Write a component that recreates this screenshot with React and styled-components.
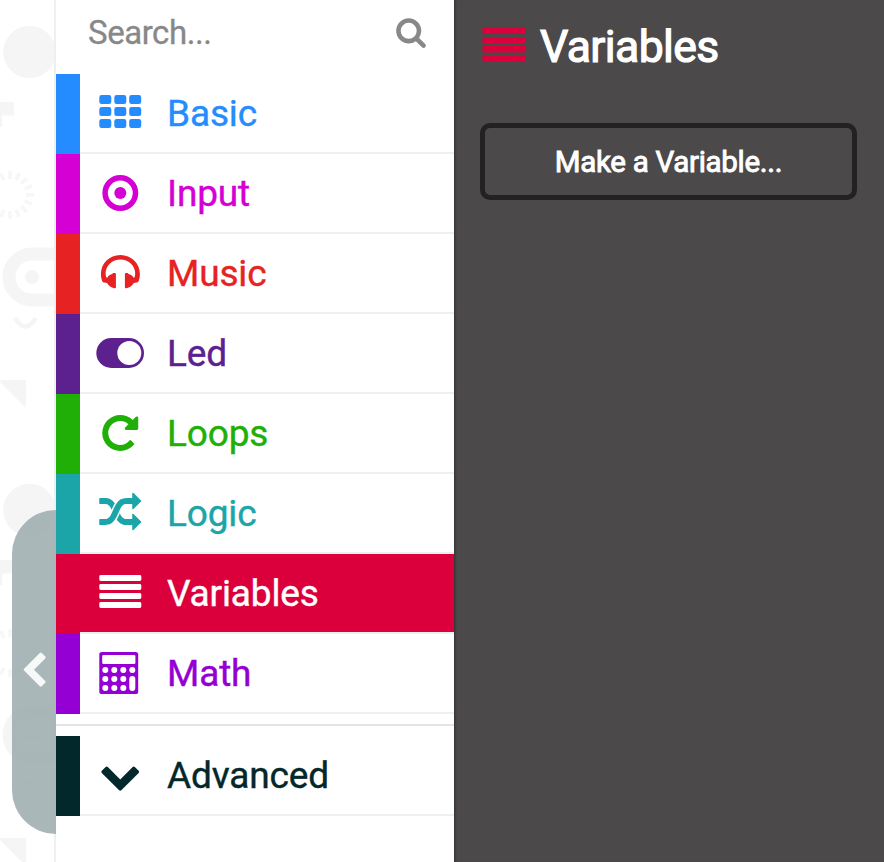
import React from "react";
import styled, { createGlobalStyle } from "styled-components";

const GlobalStyle = createGlobalStyle`
  * { box-sizing: border-box; }
  body { margin: 0; background: #fff; font-family: Roboto, "Liberation Sans", sans-serif; }
`;

const Editor = styled.div`
  display: flex;
  width: 884px;
  height: 862px;
  overflow: hidden;
  background: #fff;
`;

const Simulator = styled.aside`
  position: relative;
  flex: 0 0 56px;
  border-right: 2px solid #ecf0f1;
`;

const Backdrop = styled.svg`
  display: block;
  width: 54px;
  height: 862px;
`;

const CollapseTab = styled.button`
  position: absolute;
  left: 12px;
  top: 510px;
  width: 44px;
  height: 324px;
  border: 0;
  border-radius: 44px 0 0 44px;
  background: rgba(158, 173, 174, 0.88);
  display: flex;
  align-items: center;
  padding: 0 0 2px 3px;
`;

const Toolbox = styled.nav`
  flex: 0 0 398px;
  display: flex;
  flex-direction: column;
`;

const SearchBar = styled.div`
  height: 74px;
  padding: 0 27px 10px 32px;
  display: flex;
  align-items: center;
  justify-content: space-between;
  color: #888;
  font-size: 33px;
`;

const SearchText = styled.span`
  letter-spacing: -0.45px;
  -webkit-text-stroke: 0.3px currentColor;
`;

const Category = styled.div`
  height: 80px;
  display: flex;
  color: ${(p) => (p.$selected ? "#fff" : p.$color)};
`;

const ColorBar = styled.div`
  flex: 0 0 24px;
  background: ${(p) => p.$color};
`;

const CategoryBody = styled.div`
  flex: 1;
  display: flex;
  align-items: center;
  gap: 23px;
  padding-left: 16px;
  border-bottom: 2px solid #ecf0f1;
  background: ${(p) => p.$fill || "#fff"};
  background-clip: padding-box;
`;

const CategoryName = styled.span`
  padding-top: 2px;
  font-size: 37px;
  line-height: 76px;
  letter-spacing: -0.15px;
  -webkit-text-stroke: 0.4px currentColor;
`;

const Divider = styled.div`
  height: 2px;
  margin: 10px 0;
  background: #e3e5e5;
`;

const Flyout = styled.section`
  flex: 1;
  padding: 23px 26px 0;
  background: #4b494a;
  box-shadow: inset 3px 0 3px -2px rgba(0, 0, 0, 0.35);
`;

const FlyoutHeader = styled.header`
  display: flex;
  align-items: center;
  gap: 14px;
  height: 44px;
  padding-left: 2px;
  color: #fff;
`;

const FlyoutTitle = styled.h1`
  margin: 0;
  padding-top: 4px;
  font-size: 44.5px;
  font-weight: 400;
  line-height: 44px;
  letter-spacing: -0.6px;
  -webkit-text-stroke: 1.2px #fff;
`;

const FlyoutButton = styled.button`
  display: block;
  width: 377px;
  height: 77px;
  margin-top: 56px;
  padding: 0;
  border: 5px solid #222;
  border-radius: 10px;
  background: transparent;
  color: #fff;
  font: 400 29.5px Roboto, sans-serif;
  letter-spacing: -0.3px;
  -webkit-text-stroke: 0.9px #fff;
`;

const Glyph = styled.svg`
  display: block;
  flex: none;
  width: ${(p) => p.$size || 48}px;
  height: ${(p) => p.$size || 48}px;
  fill: currentColor;
`;

const OutlineGlyph = ({ d }) => (
  <Glyph viewBox="-138 -128 2048 2048"><path d={d} /></Glyph>
);

const paths = {
  repeat: "M1664 256v448q0 26-19 45t-45 19h-448q-42 0-59-40-17-39 14-69l138-138q-148-137-349-137-104 0-198.500 40.500t-163.500 109.500-109.500 163.500-40.500 198.500 40.500 198.500 109.500 163.500 163.500 109.500 198.500 40.500q119 0 225-52t179-147q7-10 23-12 15 0 25 9l137 138q9 8 9.500 20.500t-7.500 22.500q-109 132-264 204.500t-327 72.500q-156 0-298-61t-245-164-164-245-61-298 61-298 164-245 245-164 298-61q147 0 284.500 55.500t244.500 156.500l130-129q29-31 70-14 39 17 39 59z",
  random: "M666 481q-60 92-137 273-22-45-37-72.500t-40.500-63.500-51-56.500-63-35-81.500-14.500h-224q-14 0-23-9t-9-23v-192q0-14 9-23t23-9h224q250 0 410 225zm1126 799q0 14-9 23l-320 320q-9 9-23 9-13 0-22.500-9.500t-9.500-22.500v-192q-32 0-85 .5t-81 1-73-1-71-5-64-10.500-63-18.500-58-28.500-59-40-55-53.500-56-69.500q59-93 136-273 22 45 37 72.500t40.500 63.500 51 56.500 63 35 81.500 14.500h256v-192q0-14 9-23t23-9q12 0 24 10l319 319q9 9 9 23zm0-896q0 14-9 23l-320 320q-9 9-23 9-13 0-22.500-9.500t-9.500-22.500v-192h-256q-48 0-87 15t-69 45-51 61.500-45 77.500q-32 62-78 171-29 66-49.500 111t-54 105-64 100-74 83-90 68.500-106.500 42-128 16.500h-224q-14 0-23-9t-9-23v-192q0-14 9-23t23-9h224q48 0 87-15t69-45 51-61.500 45-77.500q32-62 78-171 29-66 49.500-111t54-105 64-100 74-83 90-68.500 106.500-42 128-16.500h256v-192q0-14 9-23t23-9q12 0 24 10l319 319q9 9 9 23z",
  chevronDown: "M1683 808l-742 741q-19 19-45 19t-45-19l-742-741q-19-19-19-45.500t19-45.500l166-165q19-19 45-19t45 19l531 531 531-531q19-19 45-19t45 19l166 165q19 19 19 45.500t-19 45.500z",
  chevronLeft: "M1427 301l-531 531 531 531q19 19 19 45t-19 45l-166 166q-19 19-45 19t-45-19l-742-742q-19-19-19-45t19-45l742-742q19-19 45-19t45 19l166 166q19 19 19 45t-19 45z",
  search: "M1216 832q0-185-131.500-316.500t-316.500-131.500-316.500 131.500-131.500 316.500 131.500 316.500 316.500 131.500 316.500-131.500 131.500-316.500zm512 832q0 52-38 90t-90 38q-54 0-90-38l-343-342q-179 124-399 124-143 0-273.500-55.500t-225-150-150-225-55.500-273.500 55.500-273.500 150-225 225-150 273.500-55.500 273.500 55.500 225 150 150 225 55.500 273.500q0 220-124 399l343 343q37 37 37 90z",
};

const HeadphonesIcon = () => (
  <Glyph viewBox="0 0 48 48">
    <path d="M6.1 32.100C5.300 29.900 4.900 27.500 4.900 25.200C4.900 14.500 13.500 6.100 24.400 6.100S43.900 14.500 43.900 25.200C43.900 27.500 43.500 29.900 42.700 32.100L41.800 33.300L37.800 34.100C36.300 36.600 34 38.400 31.300 38.900C30.500 39.200 29.200 39.500 28.900 38.600V25C28.900 24.100 29.500 24 30.300 24H31.400C32 24 32.300 24.300 32.400 24.900C34.800 25.300 36.500 26.500 37.500 28.700L38.600 28.200C39 26.800 39.200 25.600 39.200 24.300C39.200 16.800 32.300 10.600 24.400 10.600S9.600 16.800 9.600 24.300C9.600 25.600 9.800 26.800 10.200 28.200L11.300 28.700C12.300 26.500 14 25.300 16.400 24.900C16.500 24.300 16.800 24 17.400 24H18.500C19.300 24 19.900 24.100 19.900 25V38.600C19.600 39.500 18.300 39.200 17.500 38.900C14.800 38.400 12.500 36.600 11 34.100L7 33.300Z" />
  </Glyph>
);

const GridIcon = () => (
  <Glyph viewBox="0 0 48 48">
    {[6.1, 18.1, 30].map((y) =>
      [3.3, 18.3, 33.2].map((x) => (
        <rect key={`${x}-${y}`} x={x} y={y} width="12" height="9" rx="2.3" />
      ))
    )}
  </Glyph>
);

const TargetIcon = () => (
  <Glyph viewBox="0 0 48 48">
    <circle cx="24.3" cy="24" r="15.2" fill="none" stroke="currentColor" strokeWidth="5.5" />
    <circle cx="24.3" cy="24" r="6" />
  </Glyph>
);

const ToggleIcon = () => (
  <Glyph viewBox="0 0 48 48">
    <rect x="0.3" y="9" width="47.7" height="30" rx="15" />
    <circle cx="33.3" cy="24" r="12" fill="#fff" />
  </Glyph>
);

const LinesIcon = () => (
  <Glyph viewBox="0 0 48 48">
    {[6, 15, 24, 33].map((y) => (
      <rect key={y} x="3.3" y={y} width="42" height="6" rx="1.4" />
    ))}
  </Glyph>
);

const HeaderLines = styled.svg`
  display: block;
  width: 44px;
  height: 36px;
  fill: #db003b;
`;

const CalculatorIcon = () => (
  <Glyph viewBox="0 0 48 48">
    <rect x="3.3" y="3" width="38.9" height="42" rx="2.6" />
    <g fill="#fff">
      <rect x="6.2" y="6.1" width="33.2" height="9" rx="1.4" />
      {[21, 30, 39].map((y) =>
        [9.3, 18.3, 27.3].map((x) => <circle key={`${x}-${y}`} cx={x} cy={y} r="3" />)
      )}
      <circle cx="36.3" cy="21" r="3" />
      <rect x="33.3" y="27" width="6" height="15" rx="3" />
    </g>
  </Glyph>
);

const categories = [
  { name: "Basic", color: "#258cff", icon: <GridIcon /> },
  { name: "Input", color: "#d400d4", icon: <TargetIcon /> },
  { name: "Music", color: "#e62222", icon: <HeadphonesIcon /> },
  { name: "Led", color: "#5c208f", icon: <ToggleIcon /> },
  { name: "Loops", color: "#20af07", icon: <OutlineGlyph d={paths.repeat} /> },
  { name: "Logic", color: "#1ba5a8", icon: <OutlineGlyph d={paths.random} /> },
  { name: "Variables", color: "#db003b", icon: <LinesIcon />, selected: true },
  { name: "Math", color: "#9400d3", icon: <CalculatorIcon /> },
];

const CategoryRow = ({ name, color, icon, selected }) => (
  <Category $color={color} $selected={selected}>
    <ColorBar $color={color} />
    <CategoryBody $fill={selected ? color : undefined}>
      {icon}
      <CategoryName>{name}</CategoryName>
    </CategoryBody>
  </Category>
);

const ticks = Array.from({ length: 16 }, (_, i) => i * 22.5);

const Motif = ({ y }) => (
  <g transform={`translate(0 ${y})`} fill="#f5f5f5">
    <circle cx="29.5" cy="52" r="26.3" />
    <path d="M0 102h14v13.5H2V127H0z" />
    <g stroke="#f7f7f7" strokeWidth="3.6">
      {ticks.map((a) => (
        <path key={a} d="M0 -16V-24" transform={`translate(10 195) rotate(${a})`} />
      ))}
    </g>
    <path d="M60 254H32a23 23 0 0 0 0 46H60" fill="none" stroke="#f5f5f5" strokeWidth="13" />
    <circle cx="32" cy="277" r="7" />
    <path d="M15 318q10 17 21 0" fill="none" stroke="#f5f5f5" strokeWidth="4.5" />
    <path d="M-2 380H26V408z" />
  </g>
);

export default function App() {
  return (
    <>
      <GlobalStyle />
      <Editor>
        <Simulator>
          <Backdrop viewBox="0 0 54 862">
            <Motif y={0} />
            <Motif y={458} />
          </Backdrop>
          <CollapseTab aria-label="Collapse simulator">
            <Glyph $size={38} viewBox="0 0 1792 1792" color="#f7f9f9">
              <path d={paths.chevronLeft} />
            </Glyph>
          </CollapseTab>
        </Simulator>
        <Toolbox>
          <SearchBar>
            <SearchText>Search...</SearchText>
            <Glyph $size={32} viewBox="0 0 1792 1792"><path d={paths.search} /></Glyph>
          </SearchBar>
          {categories.map((c) => <CategoryRow key={c.name} {...c} />)}
          <Divider />
          <CategoryRow name="Advanced" color="#02282b" icon={<OutlineGlyph d={paths.chevronDown} />} />
        </Toolbox>
        <Flyout>
          <FlyoutHeader>
            <HeaderLines viewBox="0 0 44 36">
              {[0.5, 10, 19, 28.4].map((y) => (
                <rect key={y} x="0.5" y={y} width="43.5" height="6.6" rx="1" />
              ))}
            </HeaderLines>
            <FlyoutTitle>Variables</FlyoutTitle>
          </FlyoutHeader>
          <FlyoutButton>Make a Variable...</FlyoutButton>
        </Flyout>
      </Editor>
    </>
  );
}
